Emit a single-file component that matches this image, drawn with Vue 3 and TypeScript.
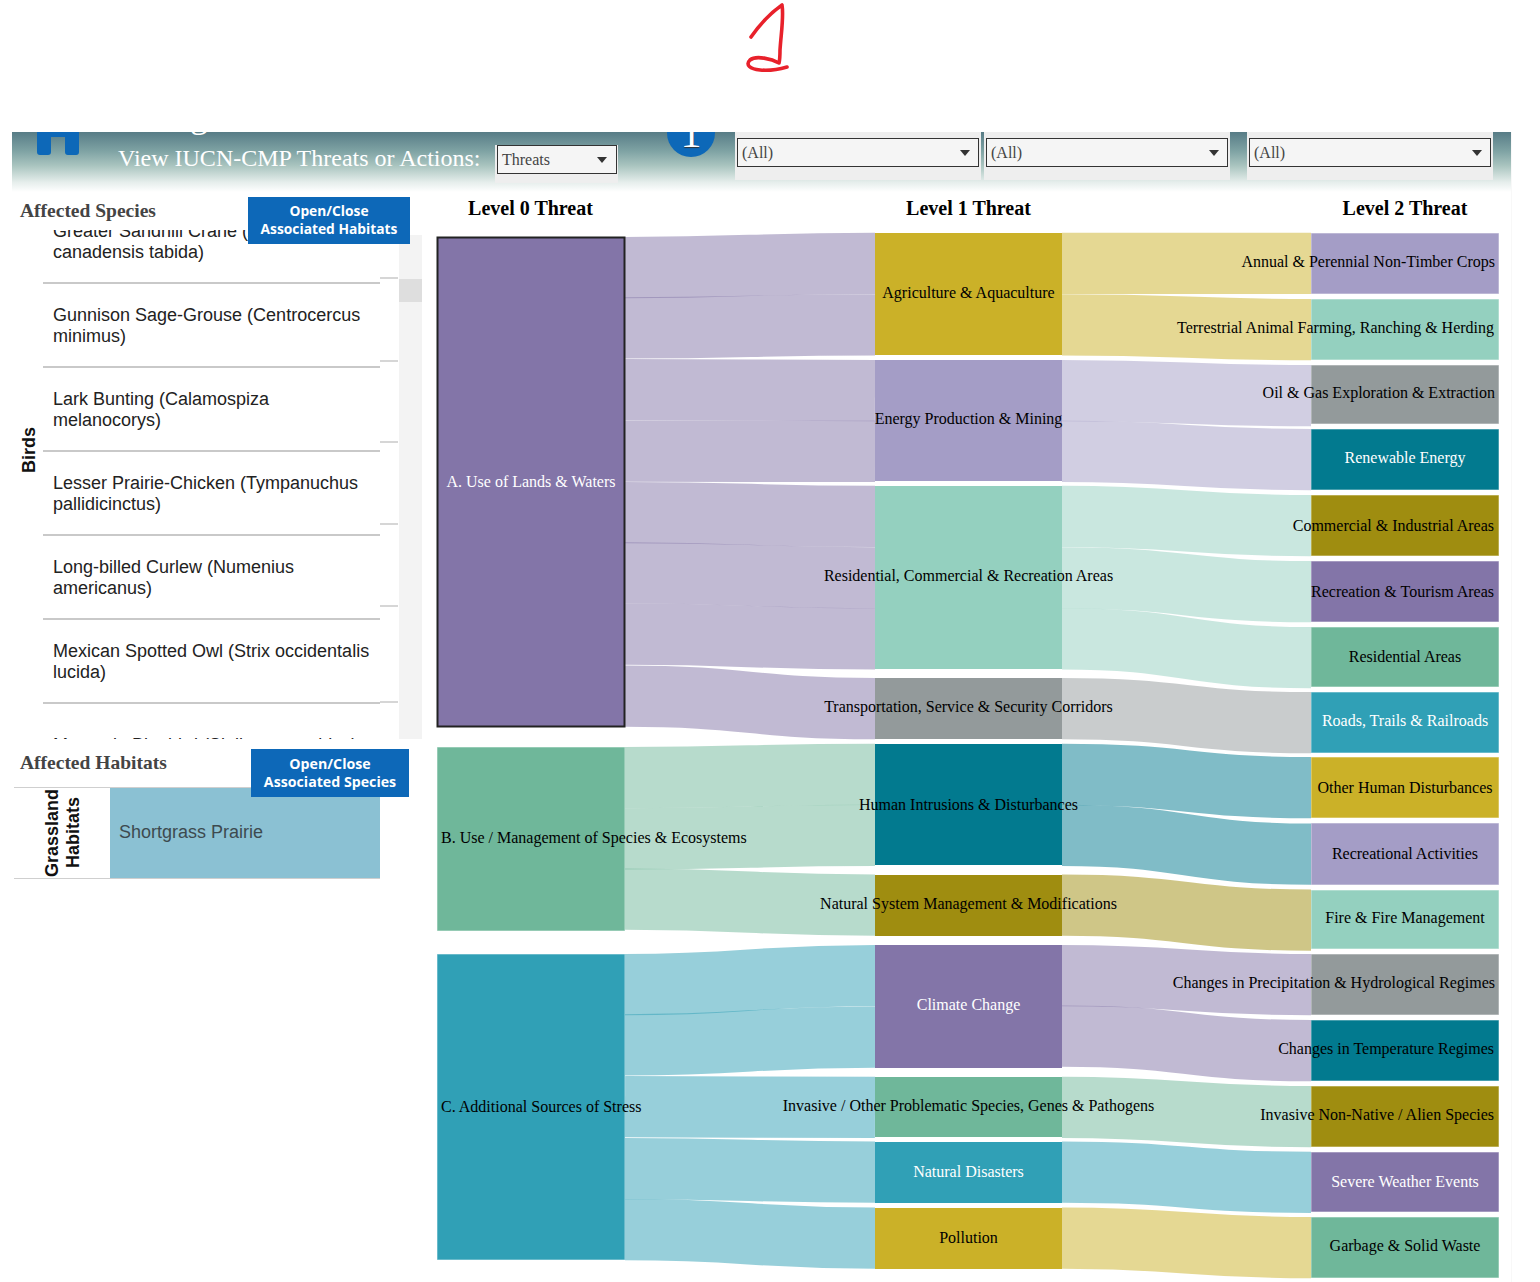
<script setup lang="ts">
interface SankeyNode { label: string; x: number; w: number; y0: number; y1: number; color: string; text: string; tx: number; ty: number; anchor: string; selected?: boolean }
interface SankeyLink { x0: number; x1: number; s: number; t: number; color: string }

const purple = '#8375a8', green = '#6fb79a', teal = '#30a0b6', gold = '#cbb128', lav = '#a49dc6', mint = '#94d0bf', grey = '#939a9b', deep = '#027a8f', olive = '#9f8d10'
const X0 = 437, X0E = 625, X1 = 875, X1E = 1062, X2 = 1311, X2E = 1499

function n(label: string, x: number, y0: number, y1: number, color: string, ty: number, opts: Partial<SankeyNode> = {}): SankeyNode {
  const w = x === X0 ? X0E - X0 : x === X1 ? X1E - X1 : X2E - X2
  return { label, x, w, y0, y1, color, text: '#000', tx: x + w / 2, ty, anchor: 'middle', ...opts }
}
const end = { tx: 1495, anchor: 'end' }
const end2 = { tx: 1494, anchor: 'end' }
const start = { tx: 441, anchor: 'start' }
const nodes: SankeyNode[] = [
  n('A. Use of Lands & Waters', X0, 237, 727, purple, 482, { text: '#fff', selected: true }),
  n('B. Use / Management of Species & Ecosystems', X0, 747, 931, green, 838, start),
  n('C. Additional Sources of Stress', X0, 954, 1260, teal, 1107, start),
  n('Agriculture & Aquaculture', X1, 233, 355, gold, 293),
  n('Energy Production & Mining', X1, 360, 481, lav, 419),
  n('Residential, Commercial & Recreation Areas', X1, 486, 669, mint, 576),
  n('Transportation, Service & Security Corridors', X1, 678, 739, grey, 707),
  n('Human Intrusions & Disturbances', X1, 744, 865, deep, 805),
  n('Natural System Management & Modifications', X1, 875, 936, olive, 904),
  n('Climate Change', X1, 945, 1068, purple, 1005, { text: '#fff' }),
  n('Invasive / Other Problematic Species, Genes & Pathogens', X1, 1077, 1137, green, 1106),
  n('Natural Disasters', X1, 1142, 1203, teal, 1172, { text: '#fff' }),
  n('Pollution', X1, 1208, 1269, gold, 1238),
  n('Annual & Perennial Non-Timber Crops', X2, 233, 294, lav, 262, end),
  n('Terrestrial Animal Farming, Ranching & Herding', X2, 299, 360, mint, 328, end2),
  n('Oil & Gas Exploration & Extraction', X2, 365, 424, grey, 393, end),
  n('Renewable Energy', X2, 429, 490, deep, 458, { text: '#fff' }),
  n('Commercial & Industrial Areas', X2, 495, 556, olive, 526, end2),
  n('Recreation & Tourism Areas', X2, 561, 622, purple, 592, end2),
  n('Residential Areas', X2, 627, 687, green, 657),
  n('Roads, Trails & Railroads', X2, 692, 753, teal, 721, { text: '#fff' }),
  n('Other Human Disturbances', X2, 757, 818, gold, 788),
  n('Recreational Activities', X2, 823, 885, lav, 854),
  n('Fire & Fire Management', X2, 890, 949, mint, 918),
  n('Changes in Precipitation & Hydrological Regimes', X2, 954, 1015, grey, 983, end),
  n('Changes in Temperature Regimes', X2, 1020, 1081, deep, 1049, end2),
  n('Invasive Non-Native / Alien Species', X2, 1086, 1147, olive, 1115, end2),
  n('Severe Weather Events', X2, 1152, 1212, purple, 1182, { text: '#fff' }),
  n('Garbage & Solid Waste', X2, 1217, 1278, green, 1246),
]

const first: [number, number, string][] = [
  [237, 232.7, purple], [297.2, 294.2, purple], [359, 360, purple], [420.6, 420.7, purple],
  [482, 485.7, purple], [542.2, 547.2, purple], [603.6, 608.2, purple], [665.5, 678, purple],
  [747, 743.7, green], [808.3, 804.7, green], [868.6, 874.5, green],
  [954, 945, teal], [1014.2, 1006.4, teal], [1076, 1076.8, teal], [1138, 1141.5, teal], [1199, 1207.5, teal],
]
const second: [number, number, string][] = [
  [232.7, 232.7, gold], [294.2, 299, gold],
  [360, 365, lav], [420.7, 429, lav],
  [485.7, 495, mint], [547.2, 561, mint], [608.2, 627, mint],
  [678, 692, grey],
  [743.7, 757, deep], [804.7, 823.5, deep],
  [874.5, 889.5, olive],
  [945, 954, purple], [1005.5, 1020, purple],
  [1076.8, 1086, green],
  [1141.5, 1151.7, teal],
  [1207.5, 1217, gold],
]
const links: SankeyLink[] = [
  ...first.map(([s, t, color]) => ({ x0: X0E, x1: X1, s, t, color })),
  ...second.map(([s, t, color]) => ({ x0: X1E, x1: X2, s, t, color })),
]
const UNIT = 61.25
function linkPath(l: SankeyLink): string {
  const a = l.s + UNIT / 2, b = l.t + UNIT / 2, m = (l.x0 + l.x1) / 2
  return `M${l.x0} ${a}C${m} ${a} ${m} ${b} ${l.x1} ${b}`
}

const heads = [
  { label: 'Level 0 Threat', x: 530.5 },
  { label: 'Level 1 Threat', x: 968.5 },
  { label: 'Level 2 Threat', x: 1405 },
]

const species: string[][] = [
  ['Greater Sandhill Crane (Antigone', 'canadensis tabida)'],
  ['Gunnison Sage-Grouse (Centrocercus', 'minimus)'],
  ['Lark Bunting (Calamospiza', 'melanocorys)'],
  ['Lesser Prairie-Chicken (Tympanuchus', 'pallidicinctus)'],
  ['Long-billed Curlew (Numenius', 'americanus)'],
  ['Mexican Spotted Owl (Strix occidentalis', 'lucida)'],
  ['Mountain Bluebird (Sialia currucoides)'],
]
const tickGaps = [47, 81, 79, 80, 80, 94]
</script>

<template>
  <div class="page">
    <div class="annotation">
      <svg class="scribble" width="50" height="76" viewBox="744 0 50 76">
        <path d="M751 37C760 24 772 12 782 5C784 16 781 34 780 50C780 55 780 59 779 63C772 59 756 55 750 60C745 65 750 69 760 70C770 71 780 69 787 67" />
      </svg>
    </div>

    <div class="frame">
      <header class="topbar">
        <svg class="home" width="42" height="24" viewBox="0 0 42 24">
          <path d="M0 0H42V20Q42 23 39 23H31Q28 23 28 20V5H14V20Q14 23 11 23H3Q0 23 0 20Z" />
        </svg>
        <span class="clipped-title">g</span>
        <div class="view-label">View IUCN-CMP Threats or Actions:</div>
        <div class="filter filter-view">
          <div class="fake-select"><span>Threats</span><i class="caret"></i></div>
        </div>
        <div class="step"><span>1</span></div>
        <div class="filter filter-a">
          <div class="fake-select"><span>(All)</span><i class="caret"></i></div>
        </div>
        <div class="filter filter-b">
          <div class="fake-select"><span>(All)</span><i class="caret"></i></div>
        </div>
        <div class="filter filter-c">
          <div class="fake-select"><span>(All)</span><i class="caret"></i></div>
        </div>
      </header>

      <main class="content">
        <aside class="side">
          <div class="side-head species-head">
            <h2>Affected Species</h2>
            <button class="toggle">Open/Close<br />Associated Habitats</button>
          </div>
          <div class="species-table">
            <div class="group"><span>Birds</span></div>
            <div class="rows">
              <div class="rows-inner">
                <div v-for="s in species" :key="s[0]" class="row">
                  <span v-for="line in s" :key="line">{{ line }}</span>
                </div>
              </div>
            </div>
            <div class="ticks">
              <i v-for="(g, idx) in tickGaps" :key="idx" :style="{ marginTop: g + 'px' }"></i>
            </div>
            <div class="scrollbar"><div class="thumb"></div></div>
          </div>

          <div class="side-head habitat-head">
            <h2>Affected Habitats</h2>
            <button class="toggle">Open/Close<br />Associated Species</button>
          </div>
          <div class="habitats">
            <div class="hab-group"><span>Grassland<br />Habitats</span></div>
            <div class="hab-cell"><span>Shortgrass Prairie</span></div>
          </div>
        </aside>

        <svg class="sankey" width="1081" height="1090" viewBox="430 192 1081 1090">
          <text v-for="h in heads" :key="h.label" class="head" :x="h.x" y="214.5" text-anchor="middle">{{ h.label }}</text>
          <path v-for="(l, i) in links" :key="i" class="link" :d="linkPath(l)" :stroke="l.color" :stroke-width="UNIT" />
          <rect
            v-for="nd in nodes"
            :key="nd.label"
            class="node"
            :class="{ selected: nd.selected, middle: nd.x === X1 }"
            :x="nd.x === X1 ? nd.x : nd.x + 0.5"
            :y="nd.x === X1 ? nd.y0 : nd.y0 + 0.5"
            :width="nd.x === X1 ? nd.w : nd.w - 1"
            :height="nd.x === X1 ? nd.y1 - nd.y0 : nd.y1 - nd.y0 - 1"
            :fill="nd.color"
            :stroke="nd.selected ? '#222' : nd.color"
          />
          <text
            v-for="nd in nodes"
            :key="'t' + nd.label"
            class="label"
            :x="nd.tx"
            :y="nd.ty"
            :fill="nd.text"
            :text-anchor="nd.anchor"
            dy="0.33em"
          >{{ nd.label }}</text>
        </svg>
      </main>
    </div>
  </div>
</template>

<style scoped>
.page {
  width: 1540px;
  height: 1282px;
  overflow: hidden;
  background: #fff;
  font-family: "Liberation Serif", serif;
}
.annotation {
  height: 132px;
  padding-left: 744px;
  box-sizing: border-box;
}
.scribble {
  display: block;
}
.scribble path {
  fill: none;
  stroke: #e8212b;
  stroke-width: 3.6;
  stroke-linecap: round;
  stroke-linejoin: round;
}
.frame {
  width: 1500px;
  margin-left: 12px;
  box-sizing: border-box;
  border-right: 1px solid #f8f8f8;
}
.topbar {
  position: relative;
  display: flex;
  align-items: flex-start;
  height: 60px;
  overflow: hidden;
  background: linear-gradient(#577c86 0, #7fa3a4 32%, #a9c4bf 56%, #e6eeec 84%, #fff 100%);
}
.home {
  display: block;
  margin-left: 25px;
  flex: none;
}
.home path {
  fill: #0d68b8;
}
.clipped-title {
  position: absolute;
  left: 178px;
  top: -35px;
  color: #fff;
  font-size: 36px;
  line-height: 36px;
}
.view-label {
  margin-left: 39px;
  width: 362px;
  flex: none;
  margin-top: 12px;
  font-size: 24px;
  line-height: 28px;
  color: #fff;
  white-space: nowrap;
}
.filter {
  flex: none;
  box-sizing: border-box;
  background: #eee;
}
.filter-view {
  width: 123px;
  height: 38px;
  margin-left: 15px;
  margin-top: 13px;
  padding-left: 2px;
  padding-right: 1px;
}
.filter-a, .filter-b, .filter-c {
  width: 246px;
  height: 48px;
  padding: 6px 2px 0;
}
.filter-a { margin-left: 20px; }
.filter-b { margin-left: 3px; }
.filter-c { margin-left: 17px; }
.filter-a .fake-select, .filter-b .fake-select, .filter-c .fake-select {
  padding-right: 8px;
}
.fake-select {
  display: flex;
  align-items: center;
  justify-content: space-between;
  height: 29px;
  box-sizing: border-box;
  border: 1px solid #333;
  background: #f5f5f5;
  padding: 0 9px 0 4px;
  color: #444;
  font-size: 16px;
}
.caret {
  width: 0;
  height: 0;
  border-left: 5px solid transparent;
  border-right: 5px solid transparent;
  border-top: 6px solid #333;
}
.step {
  position: relative;
  flex: none;
  width: 48px;
  height: 25px;
  margin-left: 49px;
  background: #0d68b8;
  border-radius: 0 0 24px 24px;
  overflow: hidden;
}
.step span {
  position: absolute;
  left: 0;
  right: 0;
  bottom: 3px;
  text-align: center;
  color: #fff;
  font-size: 42px;
  line-height: 42px;
  text-shadow: 0 1px 1px #333;
}
.content {
  display: flex;
  align-items: flex-start;
  height: 1090px;
}
.side {
  width: 418px;
  flex: none;
}
.side-head {
  display: grid;
  position: relative;
  z-index: 2;
}
.side-head h2 {
  margin: 0 0 0 8px;
  font-size: 19.5px;
  font-weight: bold;
  color: #444;
  line-height: 24px;
  white-space: nowrap;
}
.species-head {
  grid-template-columns: 236px 162px;
  padding-top: 5px;
  margin-bottom: -14px;
}
.species-head h2 {
  margin-top: 2px;
}
.habitat-head {
  grid-template-columns: 239px 158px;
  padding-top: 10px;
  margin-bottom: -10px;
}
.habitat-head h2 {
  margin-top: 2px;
}
.toggle {
  display: block;
  width: 100%;
  height: 47px;
  padding: 0 0 2px;
  border: 0;
  background: #0d68b8;
  color: #fff;
  font-family: "Open Sans", sans-serif;
  font-weight: 700;
  font-size: 13.8px;
  line-height: 18px;
  text-align: center;
  white-space: nowrap;
}
.habitat-head .toggle {
  height: 48px;
  padding: 0;
  font-size: 14.2px;
}
.species-table {
  display: flex;
  height: 509px;
}
.group {
  width: 31px;
  flex: none;
  box-sizing: border-box;
  padding: 0 0 68px 4px;
  display: flex;
  align-items: center;
  justify-content: center;
}
.group span, .hab-group span {
  writing-mode: vertical-rl;
  transform: rotate(180deg);
  font-family: "Liberation Sans", sans-serif;
  font-weight: bold;
  font-size: 18px;
  line-height: 21px;
  color: #111;
  text-align: center;
}
.rows {
  width: 337px;
  flex: none;
  overflow: hidden;
}
.rows-inner {
  margin-top: -30px;
}
.row {
  height: 84px;
  box-sizing: border-box;
  padding: 21px 0 0 10px;
  border-bottom: 2px solid #c9c9c9;
  font-family: "Liberation Sans", sans-serif;
  font-size: 18px;
  line-height: 21px;
  color: #222;
}
.row:last-child {
  padding-top: 31px;
  border-bottom: 0;
}
.row span {
  display: block;
  white-space: nowrap;
}
.ticks {
  width: 18px;
  flex: none;
}
.ticks i {
  display: block;
  height: 2px;
  background: #d6d6d6;
}
.scrollbar {
  width: 23px;
  margin-left: 1px;
  margin-top: 5px;
  flex: none;
  background: #f3f3f3;
}
.thumb {
  height: 23px;
  margin-top: 44px;
  background: #dedede;
}
.habitats {
  display: flex;
  width: 366px;
  height: 92px;
  margin-left: 2px;
  box-sizing: border-box;
  border-top: 1px solid #cfcfcf;
  border-bottom: 1px solid #cfcfcf;
}
.hab-group {
  width: 96px;
  flex: none;
  padding-left: 1px;
  box-sizing: border-box;
  display: flex;
  align-items: center;
  justify-content: center;
}
.hab-cell {
  flex: 1;
  display: flex;
  align-items: center;
  padding: 0 0 2px 9px;
  background: #8bc1d3;
  color: #3d4a4f;
  font-family: "Liberation Sans", sans-serif;
  font-size: 18px;
}
.sankey {
  display: block;
  flex: none;
}
.head {
  font-size: 20px;
  font-weight: bold;
  fill: #000;
}
.link {
  fill: none;
  stroke-opacity: 0.5;
}
.node {
  stroke-opacity: 0.45;
  stroke-width: 1;
}
.node.middle {
  stroke: none;
}
.node.selected {
  stroke-opacity: 1;
  stroke-width: 2;
}
.label {
  font-size: 16px;
}
</style>
